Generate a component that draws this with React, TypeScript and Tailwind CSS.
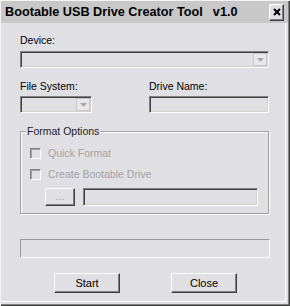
import React from "react";

const sunken =
  "border border-t-[#808080] border-l-[#808080] border-b-[#ffffff] border-r-[#ffffff] shadow-[inset_1px_1px_0_#404040,inset_-1px_-1px_0_#d4d0c8]";
const raised =
  "border border-t-[#ffffff] border-l-[#ffffff] border-b-[#404040] border-r-[#404040] shadow-[inset_-1px_-1px_0_#808080]";

function Combo({ w }: { w: string }) {
  return (
    <div className={`${sunken} ${w} h-[17px] bg-[#e0dfe3] flex justify-end items-stretch p-[1px]`}>
      <div className="w-[14px] bg-[#e8e8ec] border border-[#c8c8cc] flex items-center justify-center">
        <svg width="7" height="4" viewBox="0 0 7 4">
          <path d="M0 0 H7 L3.5 4 Z" fill="#a8a8a8" />
        </svg>
      </div>
    </div>
  );
}

function Check({ label }: { label: string }) {
  return (
    <div className="flex items-center h-[13px]">
      <div className="w-[11px] h-[11px] border border-t-[#808080] border-l-[#808080] border-b-[#ffffff] border-r-[#ffffff] bg-[#e0dfe3] shadow-[inset_1px_1px_0_#a0a0a0]" />
      <span className="ml-[7px] text-[#a3a3a3] leading-[13px]">{label}</span>
    </div>
  );
}

export default function App() {
  return (
    <div
      className="w-[290px] h-[306px] bg-[#e0dfe3] flex flex-col text-[10.5px] text-black shadow-[inset_1px_1px_0_#f4f4f4,inset_-1px_-1px_0_#404040,inset_-2px_-2px_0_#808080,inset_-4px_-4px_0_#e0dfe3,inset_-5px_-5px_0_#ffffff]"
      style={{ fontFamily: '"Liberation Sans", Arial, sans-serif' }}
    >
      {/* Title bar */}
      <div className="h-[22px] bg-[#c8c8c8] flex items-center pl-[4px] pr-[4px] ml-[1px] mt-[1px] mr-[2px]">
        <span className="font-bold text-[12.7px] leading-[16px] whitespace-nowrap">
          Bootable USB Drive Creator Tool
        </span>
        <span className="font-bold text-[12.7px] leading-[16px] ml-[10px]">v1.0</span>
        <div className={`${raised} ml-auto w-[15px] h-[17px] bg-[#e0dfe3] flex items-center justify-center`}>
          <svg width="8" height="8" viewBox="0 0 8 8">
            <path d="M1 1 L7 7 M7 1 L1 7" stroke="#000" strokeWidth="2" />
          </svg>
        </div>
      </div>

      {/* Content */}
      <div className="flex flex-col px-[20px]">
        <div className="mt-[11px] leading-[13px] h-[13px]">Device:</div>
        <div className="mt-[4px]">
          <Combo w="w-[249px]" />
        </div>

        <div className="mt-[12px] flex">
          <div className="w-[129px] flex flex-col">
            <div className="leading-[13px] h-[13px]">File System:</div>
            <div className="mt-[3px]">
              <Combo w="w-[72px]" />
            </div>
          </div>
          <div className="flex flex-col">
            <div className="leading-[13px] h-[13px]">Drive Name:</div>
            <div className={`mt-[3px] w-[120px] h-[17px] bg-[#e0dfe3] ${sunken}`} />
          </div>
        </div>

        {/* Group box */}
        <div className="relative mt-[18px] w-[249px] h-[83px] border border-[#a0a0a0] shadow-[1px_1px_0_#ffffff,inset_1px_1px_0_#ffffff] flex flex-col pl-[9px] pr-[10px]">
          <span className="absolute left-[5px] top-[-7px] bg-[#e0dfe3] px-[1px] leading-[13px] text-[#222]">
            Format Options
          </span>
          <div className="mt-[15px]">
            <Check label="Quick Format" />
          </div>
          <div className="mt-[8px]">
            <Check label="Create Bootable Drive" />
          </div>
          <div className="mt-[7px] flex items-center pl-[15px]">
            <div className={`${raised} w-[30px] h-[18px] flex items-center justify-center text-[#a3a3a3] leading-none pb-[2px]`}>
              ...
            </div>
            <div className={`ml-[8px] w-[175px] h-[18px] ${sunken}`} />
          </div>
        </div>

        {/* Progress */}
        <div className="mt-[25px] w-[250px] h-[19px] border border-t-[#9a9a9a] border-l-[#9a9a9a] border-b-[#ffffff] border-r-[#ffffff]" />

        {/* Buttons */}
        <div className="mt-[15px] flex">
          <div className={`${raised} ml-[34px] w-[66px] h-[20px] flex items-center justify-center text-[11px]`}>
            Start
          </div>
          <div className={`${raised} ml-[51px] w-[66px] h-[20px] flex items-center justify-center text-[11px]`}>
            Close
          </div>
        </div>
      </div>
    </div>
  );
}
